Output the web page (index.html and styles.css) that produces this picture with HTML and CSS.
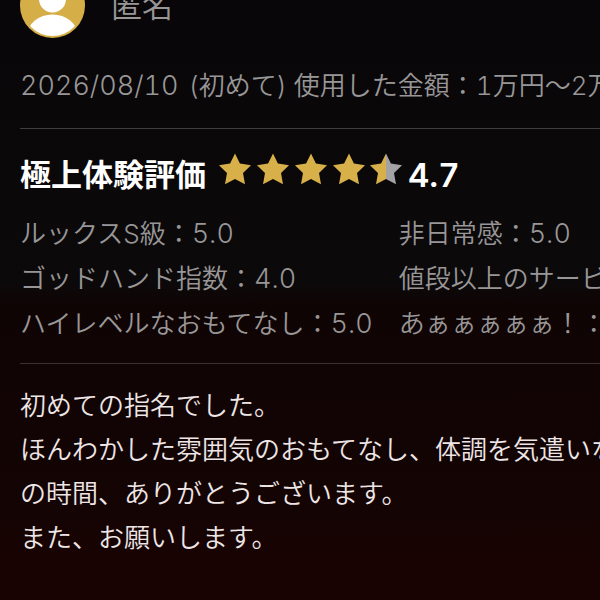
FILE: index.html
```html
<!DOCTYPE html>
<html lang="ja">

<head>
    <meta charset="UTF-8">
    <meta name="viewport" content="width=device-width, initial-scale=1">
    <title>極上体験評価</title>
    <link rel="stylesheet" href="styles.css">
</head>

<body>
    <article class="review">
        <header class="reviewer">
            <svg class="avatar" viewBox="0 0 65 65" aria-hidden="true">
                <defs>
                    <clipPath id="avatarClip">
                        <circle cx="32.5" cy="32.5" r="30.5" />
                    </clipPath>
                </defs>
                <circle cx="32.5" cy="32.5" r="32.5" fill="#d6ae47" />
                <g clip-path="url(#avatarClip)" fill="#fff">
                    <circle cx="32.5" cy="26" r="13.5" />
                    <ellipse cx="32.5" cy="62" rx="25" ry="20.5" />
                </g>
            </svg>
            <span class="name">匿名</span>
        </header>

        <p class="visit"><time datetime="2026-08-10">2026/08/10</time> (初めて) 使用した金額：1万円〜2万円</p>

        <section class="scores">
            <div class="total">
                <h2>極上体験評価</h2>
                <svg class="stars" viewBox="0 0 184 34" role="img" aria-label="4.7">
                    <defs>
                        <linearGradient id="half">
                            <stop offset="50%" stop-color="#d8b04a" />
                            <stop offset="50%" stop-color="#a3a3a5" />
                        </linearGradient>
                        <path id="star" d="M16 0.5 L20.9 10.6 L32 12.2 L24 20 L26 31.3 L16 26 L6 31.3 L8 20 L0 12.2 L11.1 10.6 Z" />
                    </defs>
                    <g fill="#d8b04a">
                        <use href="#star" x="0" />
                        <use href="#star" x="38" />
                        <use href="#star" x="76" />
                        <use href="#star" x="114" />
                    </g>
                    <use href="#star" x="151" fill="url(#half)" />
                </svg>
                <strong class="average">4.7</strong>
            </div>
            <ul class="items">
                <li>ルックスS級：<span class="score">5.0</span></li>
                <li>非日常感：<span class="score">5.0</span></li>
                <li>ゴッドハンド指数：<span class="score">4.0</span></li>
                <li>値段以上のサービス：<span class="score">5.0</span></li>
                <li>ハイレベルなおもてなし：<span class="score">5.0</span></li>
                <li>あぁぁぁぁぁ！：<span class="score">5.0</span></li>
            </ul>
        </section>

        <p class="comment">
            初めての指名でした。<br>
            ほんわかした雰囲気のおもてなし、体調を気遣いな<br>
            の時間、ありがとうございます。<br>
            また、お願いします。
        </p>
    </article>
</body>

</html>
```

FILE: styles.css
```css
body {
    margin: 0;
    min-height: 100vh;
    overflow: hidden;
    font-family: Inter, 'Noto Sans CJK JP', sans-serif;
    font-size: 26px;
    font-weight: 350;
    font-variant-numeric: tabular-nums;
    color: #989697;
    background: #190302 linear-gradient(#080608 0%, #0c090a 47%, #0f0404 51%, #140404 83%, #190302 96%) no-repeat;
}

.review {
    padding-left: 20px;
    white-space: nowrap;
}

/* the top half of the reviewer row is scrolled out of view */
.reviewer {
    display: flex;
    align-items: center;
    gap: 26px;
    height: 65px;
    margin-top: -27px;
}

.avatar {
    width: 65px;
    height: 65px;
}

.name {
    font-size: 31px;
    line-height: 40px;
}

.visit {
    margin: 0;
    padding: 26px 0 20px;
    line-height: 44px;
}

.visit time {
    margin-right: 3px;
    font-size: 27px;
}

.scores {
    padding: 20px 0 17px;
    border-top: 1px solid #403e3f;
    border-bottom: 1px solid #3a3132;
}

.total {
    display: flex;
    align-items: center;
    height: 52px;
    color: #fff;
}

.total h2 {
    margin: 0;
    font-size: 31px;
    line-height: 52px;
}

.stars {
    width: 184px;
    height: 34px;
    margin: 0 5px 10px 13px;
}

.average {
    font-size: 33px;
    font-weight: 600;
}

.items {
    display: grid;
    grid-template-columns: max-content max-content;
    column-gap: 26px;
    margin: 10px 0 0;
    padding: 0;
    list-style: none;
    line-height: 45px;
}

.score {
    font-size: 27px;
}

.comment {
    margin: 0;
    padding: 20px 0 36px;
    line-height: 44px;
    color: #eee6e6;
}
```
